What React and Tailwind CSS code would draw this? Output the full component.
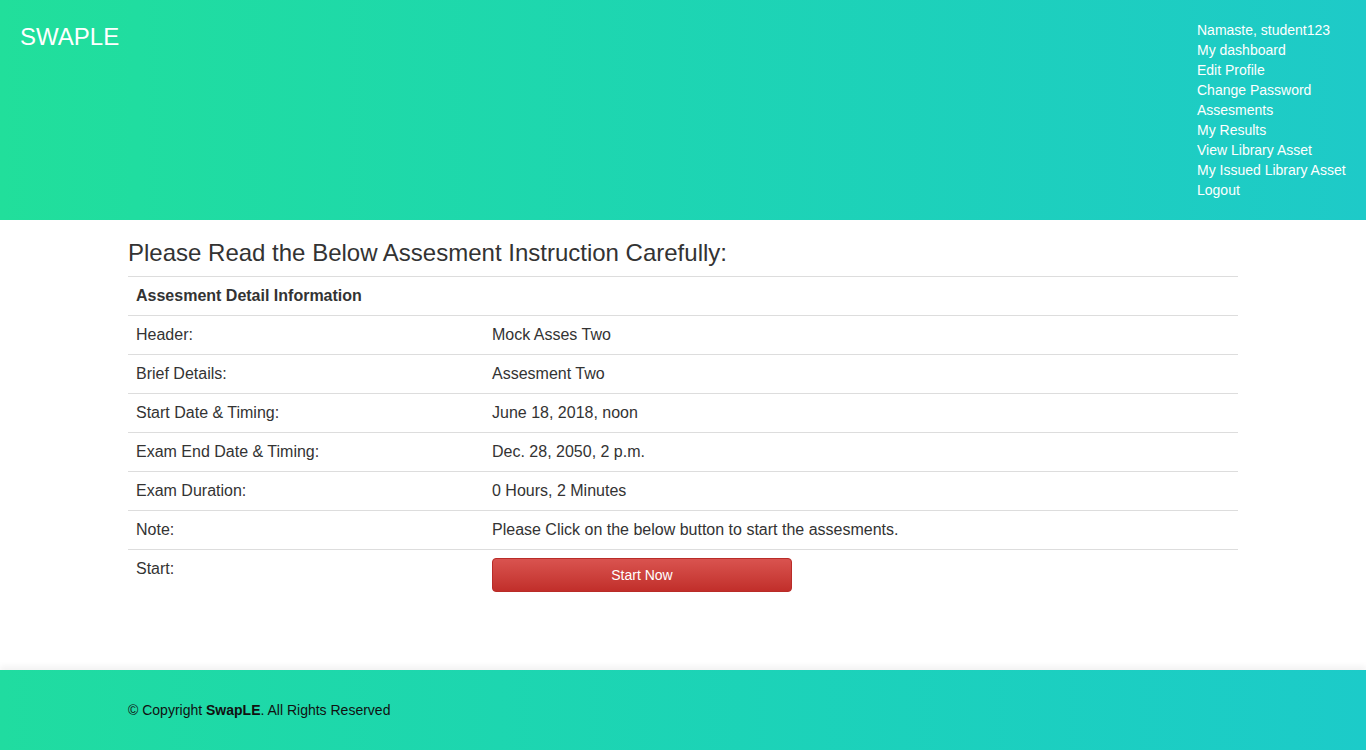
const links = [
  'Namaste, student123',
  'My dashboard',
  'Edit Profile',
  'Change Password',
  'Assesments',
  'My Results',
  'View Library Asset',
  'My Issued Library Asset',
  'Logout',
]

const rows = [
  ['Header:', 'Mock Asses Two'],
  ['Brief Details:', 'Assesment Two'],
  ['Start Date & Timing:', 'June 18, 2018, noon'],
  ['Exam End Date & Timing:', 'Dec. 28, 2050, 2 p.m.'],
  ['Exam Duration:', '0 Hours, 2 Minutes'],
  ['Note:', 'Please Click on the below button to start the assesments.'],
]

export default function App() {
  return (
    <div className="flex min-h-screen flex-col bg-white font-['Liberation_Sans',Arial,sans-serif] text-[#333]">
      {/* header */}
      <header className="flex h-[220px] justify-between bg-gradient-to-r from-[#21df9b] to-[#1ecac8] text-white">
        <div className="pl-5 pt-[22px] text-[24px] leading-[30px]">SWAPLE</div>
        <nav className="flex w-[169px] flex-col pt-5 text-[14px] leading-5">
          {links.map((l) => (
            <a key={l} href="#" className="text-white">
              {l}
            </a>
          ))}
        </nav>
      </header>

      {/* main */}
      <main className="flex-1">
        <div className="mx-auto w-[1110px] pt-5">
          <h1 className="mb-[10px] text-[24px] leading-[26px]">Please Read the Below Assesment Instruction Carefully:</h1>
          <table className="w-full border-collapse text-[16px] leading-[22px]">
            <tbody>
              <tr className="border-t border-[#ddd]">
                <td colSpan={2} className="px-2 py-2 font-bold">Assesment Detail Information</td>
              </tr>
              {rows.map(([k, v]) => (
                <tr key={k} className="border-t border-[#ddd]">
                  <td className="w-[356px] px-2 py-2 align-top">{k}</td>
                  <td className="px-2 py-2 align-top">{v}</td>
                </tr>
              ))}
              <tr className="border-t border-[#ddd]">
                <td className="w-[356px] px-2 py-2 align-top">Start:</td>
                <td className="px-2 py-2 align-top">
                  <button className="h-[34px] w-[300px] rounded-[4px] border border-[#b92c28] bg-gradient-to-b from-[#d9534f] to-[#c12e2a] text-[14px] text-white">
                    Start Now
                  </button>
                </td>
              </tr>
            </tbody>
          </table>
        </div>
      </main>

      {/* footer */}
      <footer className="h-[80px] bg-gradient-to-r from-[#20dca0] to-[#1ccbc9] shadow-[0_-4px_6px_rgba(0,0,0,0.05)]">
        <div className="mx-auto w-[1110px] pt-[30px] text-[14px] leading-5 text-[#111]">
          © Copyright <b>SwapLE</b>. All Rights Reserved
        </div>
      </footer>
    </div>
  )
}
